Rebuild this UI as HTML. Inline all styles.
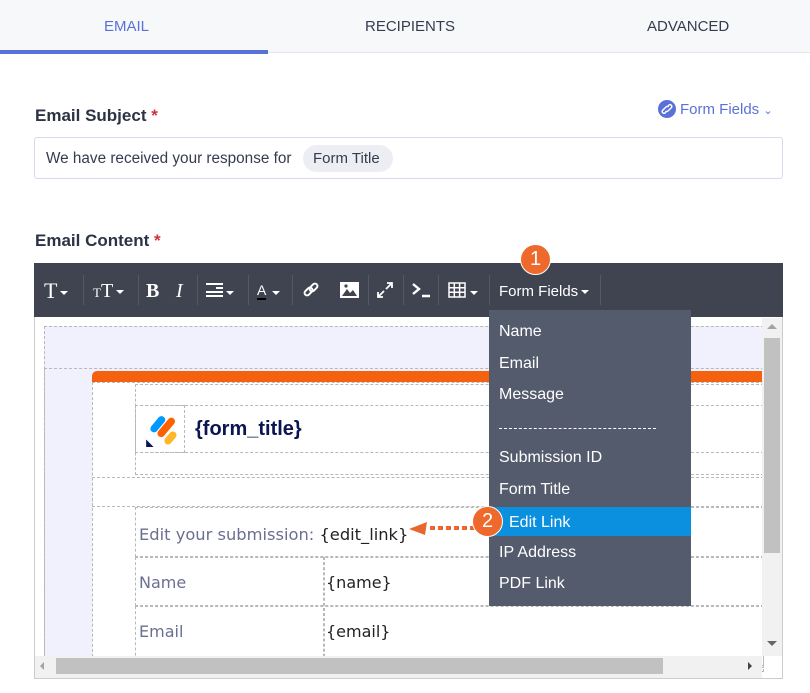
<!DOCTYPE html>
<html><head><meta charset="utf-8"><style>
*{margin:0;padding:0;box-sizing:border-box}
body{width:810px;height:693px;background:#fff;font-family:"Liberation Sans",sans-serif;position:relative;overflow:hidden}
.a{position:absolute}
.tab{position:absolute;top:18px;font-size:15px;color:#343c4e}
.lbl{font-size:17px;font-weight:bold;color:#2c3345}
.dash{position:absolute;border:1px dashed #b8b8b8}
.tb{position:absolute;top:278px;color:#fff}
.sep{position:absolute;top:275px;width:1px;height:30px;background:#535a67}
.car{display:inline-block;border-left:4px solid transparent;border-right:4px solid transparent;border-top:4px solid #fff;vertical-align:middle;margin-left:3px}
.dd{position:absolute;left:499px;color:#fff;font-size:16px}
.ed{font-family:"DejaVu Sans",sans-serif;font-size:15.5px;color:#6b6f90}
</style></head><body>
<div class="a" style="left:0;top:0;width:810px;height:53px;background:#f7f8fa;border-bottom:1px solid #e3e5ee"></div>
<div class="a" style="left:0;top:50px;width:268px;height:4px;background:#5a72d8"></div>
<div class="tab" style="left:104px;color:#5a72d8">EMAIL</div>
<div class="tab" style="left:365px">RECIPIENTS</div>
<div class="tab" style="left:647px">ADVANCED</div>

<div class="a lbl" style="left:35px;top:106px">Email Subject <span style="color:#d0323c">*</span></div>
<div class="a" style="left:658px;top:100px;width:18px;height:18px;border-radius:50%;background:#5a72d8"></div>
<svg class="a" style="left:661px;top:103px" width="12" height="12" viewBox="0 0 12 12" fill="none" stroke="#fff" stroke-width="1.4"><path d="M7 3 L8 2 a1.8 1.8 0 0 1 2.5 2.5 L7 8 a1.8 1.8 0 0 1 -2.5 0 M5 9 L4 10 a1.8 1.8 0 0 1 -2.5 -2.5 L5 4 a1.8 1.8 0 0 1 2.5 0"/></svg>
<div class="a" style="left:680px;top:101px;font-size:15px;color:#5a72d8">Form Fields <span style="font-size:11px">&#8964;</span></div>
<div class="a" style="left:34px;top:137px;width:749px;height:42px;border:1px solid #d8dae9;border-radius:3px"></div>
<div class="a" style="left:46px;top:150px;font-size:15.3px;color:#343c4e">We have received your response for</div>
<div class="a" style="left:303px;top:145px;width:90px;height:27px;border-radius:14px;background:#eceef4;font-size:15px;color:#343c4e;padding:5px 0 0 10px">Form Title</div>

<div class="a lbl" style="left:35px;top:231px">Email Content <span style="color:#d0323c">*</span></div>

<div class="a" style="left:34px;top:263px;width:749px;height:416px;border:1px solid #ccc;background:#fff"></div>
<div class="a" style="left:34px;top:263px;width:749px;height:54px;background:#3f4450"></div>
<div class="tb" style="left:44px;font-family:'Liberation Serif',serif;font-size:22px;top:278px">T<span class="car"></span></div>
<div class="sep" style="left:83px"></div>
<div class="tb" style="left:93px;font-family:'Liberation Serif',serif;font-size:20px;top:280px"><span style="font-size:13px">T</span>T<span class="car"></span></div>
<div class="sep" style="left:138px"></div>
<div class="tb" style="left:146px;font-family:'Liberation Serif',serif;font-weight:bold;font-size:20px;top:280px">B</div>
<div class="tb" style="left:176px;font-family:'Liberation Serif',serif;font-style:italic;font-size:20px;top:280px">I</div>
<div class="sep" style="left:197px"></div>
<div class="a" style="left:206px;top:283px;width:17px;height:2px;background:#fff;box-shadow:0 4px 0 #fff,0 8px 0 #fff,0 12px 0 #fff"></div>
<div class="a" style="left:206px;top:287px;width:10px;height:2px;background:#3f4450"></div>
<div class="tb" style="left:223px;top:284px"><span class="car"></span></div>
<div class="sep" style="left:248px"></div>
<div class="tb" style="left:257px;font-size:14px;top:282px;border-bottom:2px solid #000">A</div>
<div class="tb" style="left:269px;top:284px"><span class="car"></span></div>
<div class="sep" style="left:292px"></div>
<svg class="a" style="left:302px;top:281px" width="18" height="18" viewBox="0 0 18 18" fill="none" stroke="#fff" stroke-width="2"><rect x="2" y="8" width="9" height="5" rx="2.5" transform="rotate(-45 6.5 10.5)"/><rect x="7" y="4" width="9" height="5" rx="2.5" transform="rotate(-45 11.5 6.5)"/></svg>
<svg class="a" style="left:340px;top:282px" width="19" height="16" viewBox="0 0 19 16"><rect width="19" height="16" fill="#fff"/><path d="M2 14 L7 7 L10 11 L13 8 L17 14Z" fill="#3f4450"/><circle cx="6" cy="4" r="1.6" fill="#3f4450"/></svg>
<div class="sep" style="left:368px"></div>
<svg class="a" style="left:376px;top:281px" width="18" height="18" viewBox="0 0 18 18" fill="none" stroke="#fff" stroke-width="1.8"><path d="M10 8 L16 2 M11 2 H16 V7 M8 10 L2 16 M2 11 V16 H7"/></svg>
<div class="sep" style="left:403px"></div>
<svg class="a" style="left:411px;top:282px" width="20" height="16" viewBox="0 0 20 16" fill="none" stroke="#fff" stroke-width="2.4"><path d="M2 2 L8 7 L2 12 M11 14 H19"/></svg>
<div class="sep" style="left:438px"></div>
<svg class="a" style="left:448px;top:282px" width="18" height="16" viewBox="0 0 18 16" fill="none" stroke="#fff" stroke-width="1.5"><rect x="1" y="1" width="16" height="14"/><path d="M6.3 1V15M11.6 1V15M1 5.7H17M1 10.3H17"/></svg>
<div class="tb" style="left:467px;top:284px"><span class="car"></span></div>
<div class="sep" style="left:489px"></div>
<div class="tb" style="left:499px;top:283px;font-size:15px">Form Fields<span class="car"></span></div>
<div class="sep" style="left:600px"></div>

<div class="a" style="left:44px;top:326px;width:718px;height:330px;background:#f0f1fd"></div>
<div class="dash" style="left:44px;top:326px;width:720px;height:340px"></div>
<div class="dash" style="left:44px;top:368px;width:720px;height:300px"></div>
<div class="a" style="left:92px;top:382px;width:670px;height:274px;background:#fff"></div>
<div class="a" style="left:92px;top:371px;width:670px;height:11px;background:#f5620f;border-radius:5px 0 0 0"></div>
<div class="dash" style="left:92px;top:382px;width:672px;height:290px"></div>
<div class="dash" style="left:135px;top:384px;width:629px;height:91px"></div>
<div class="dash" style="left:135px;top:405px;width:629px;height:48px"></div>
<div class="dash" style="left:135px;top:405px;width:50px;height:48px"></div>
<svg class="a" style="left:145px;top:410px" width="34" height="38" viewBox="0 0 32 36"><rect x="3" y="10" width="18" height="7" rx="3.5" fill="#0099ff" transform="rotate(-50 12 13.5)"/><rect x="9" y="13" width="22" height="7" rx="3.5" fill="#ff6100" transform="rotate(-50 20 16.5)"/><rect x="17" y="23" width="14" height="7" rx="3.5" fill="#ffb629" transform="rotate(-50 24 26.5)"/><path d="M1 35 V28 L8 35Z" fill="#0a1551"/></svg>
<div class="a" style="left:195px;top:418px;font-size:20px;font-weight:bold;color:#0a1551">{form_title}</div>
<div class="dash" style="left:92px;top:477px;width:672px;height:30px"></div>
<div class="dash" style="left:135px;top:507px;width:629px;height:50px"></div>
<div class="dash" style="left:135px;top:557px;width:629px;height:49px"></div>
<div class="dash" style="left:135px;top:606px;width:629px;height:60px"></div>
<div class="dash" style="left:323px;top:557px;width:1px;height:110px"></div>
<div class="a ed" style="left:139px;top:525px;font-size:16.3px">Edit your submission: <span style="color:#222">{edit_link}</span></div>
<div class="a ed" style="left:139px;top:573px;font-size:16px">Name</div>
<div class="a ed" style="left:326px;top:573px;color:#222;font-size:16px">{name}</div>
<div class="a ed" style="left:139px;top:622px;font-size:16px">Email</div>
<div class="a ed" style="left:326px;top:622px;color:#222;font-size:16px">{email}</div>

<div class="a" style="left:762px;top:318px;width:20px;height:338px;background:#f1f1f1"></div>
<div class="a" style="left:764px;top:338px;width:16px;height:215px;background:#c1c1c1"></div>
<div class="a" style="left:767px;top:324px;border:5px solid transparent;border-bottom:5px solid #a3a3a3;border-top:0"></div>
<div class="a" style="left:767px;top:641px;border:5px solid transparent;border-top:5px solid #666;border-bottom:0"></div>
<div class="a" style="left:35px;top:656px;width:727px;height:22px;background:#f1f1f1"></div>
<div class="a" style="left:56px;top:658px;width:607px;height:16px;background:#c1c1c1"></div>
<div class="a" style="left:40px;top:662px;border:4px solid transparent;border-right:4px solid #a3a3a3;border-left:0"></div>
<div class="a" style="left:748px;top:662px;border:4px solid transparent;border-left:4px solid #444;border-right:0"></div>

<div class="a" style="left:489px;top:310px;width:202px;height:296px;background:#545b6c"></div>
<div class="a" style="left:489px;top:507px;width:202px;height:29px;background:#0b8fdf"></div>
<div class="dd" style="top:323px">Name</div>
<div class="dd" style="top:355px">Email</div>
<div class="dd" style="top:386px">Message</div>
<div class="a" style="left:499px;top:428px;width:157px;height:0;border-top:1px dashed #fff"></div>
<div class="dd" style="top:449px">Submission ID</div>
<div class="dd" style="top:481px">Form Title</div>
<div class="dd" style="top:514px;left:509px">Edit Link</div>
<div class="dd" style="top:544px">IP Address</div>
<div class="dd" style="top:575px">PDF Link</div>

<div class="a" style="left:520px;top:244px;width:31px;height:31px;border-radius:50%;background:#ee6a2c;border:1px solid #fff;color:#fff;font-size:20px;text-align:center;line-height:29px">1</div>
<svg class="a" style="left:405px;top:518px" width="70" height="20"><path d="M70 10 H22" stroke="#e8672f" stroke-width="4" stroke-dasharray="5 3"/><path d="M4 11 L22 4 L20 17Z" fill="#e8672f"/></svg>
<div class="a" style="left:472px;top:506px;width:31px;height:31px;border-radius:50%;background:#ee6a2c;border:1px solid #fff;color:#fff;font-size:20px;text-align:center;line-height:29px">2</div>
</body></html>
